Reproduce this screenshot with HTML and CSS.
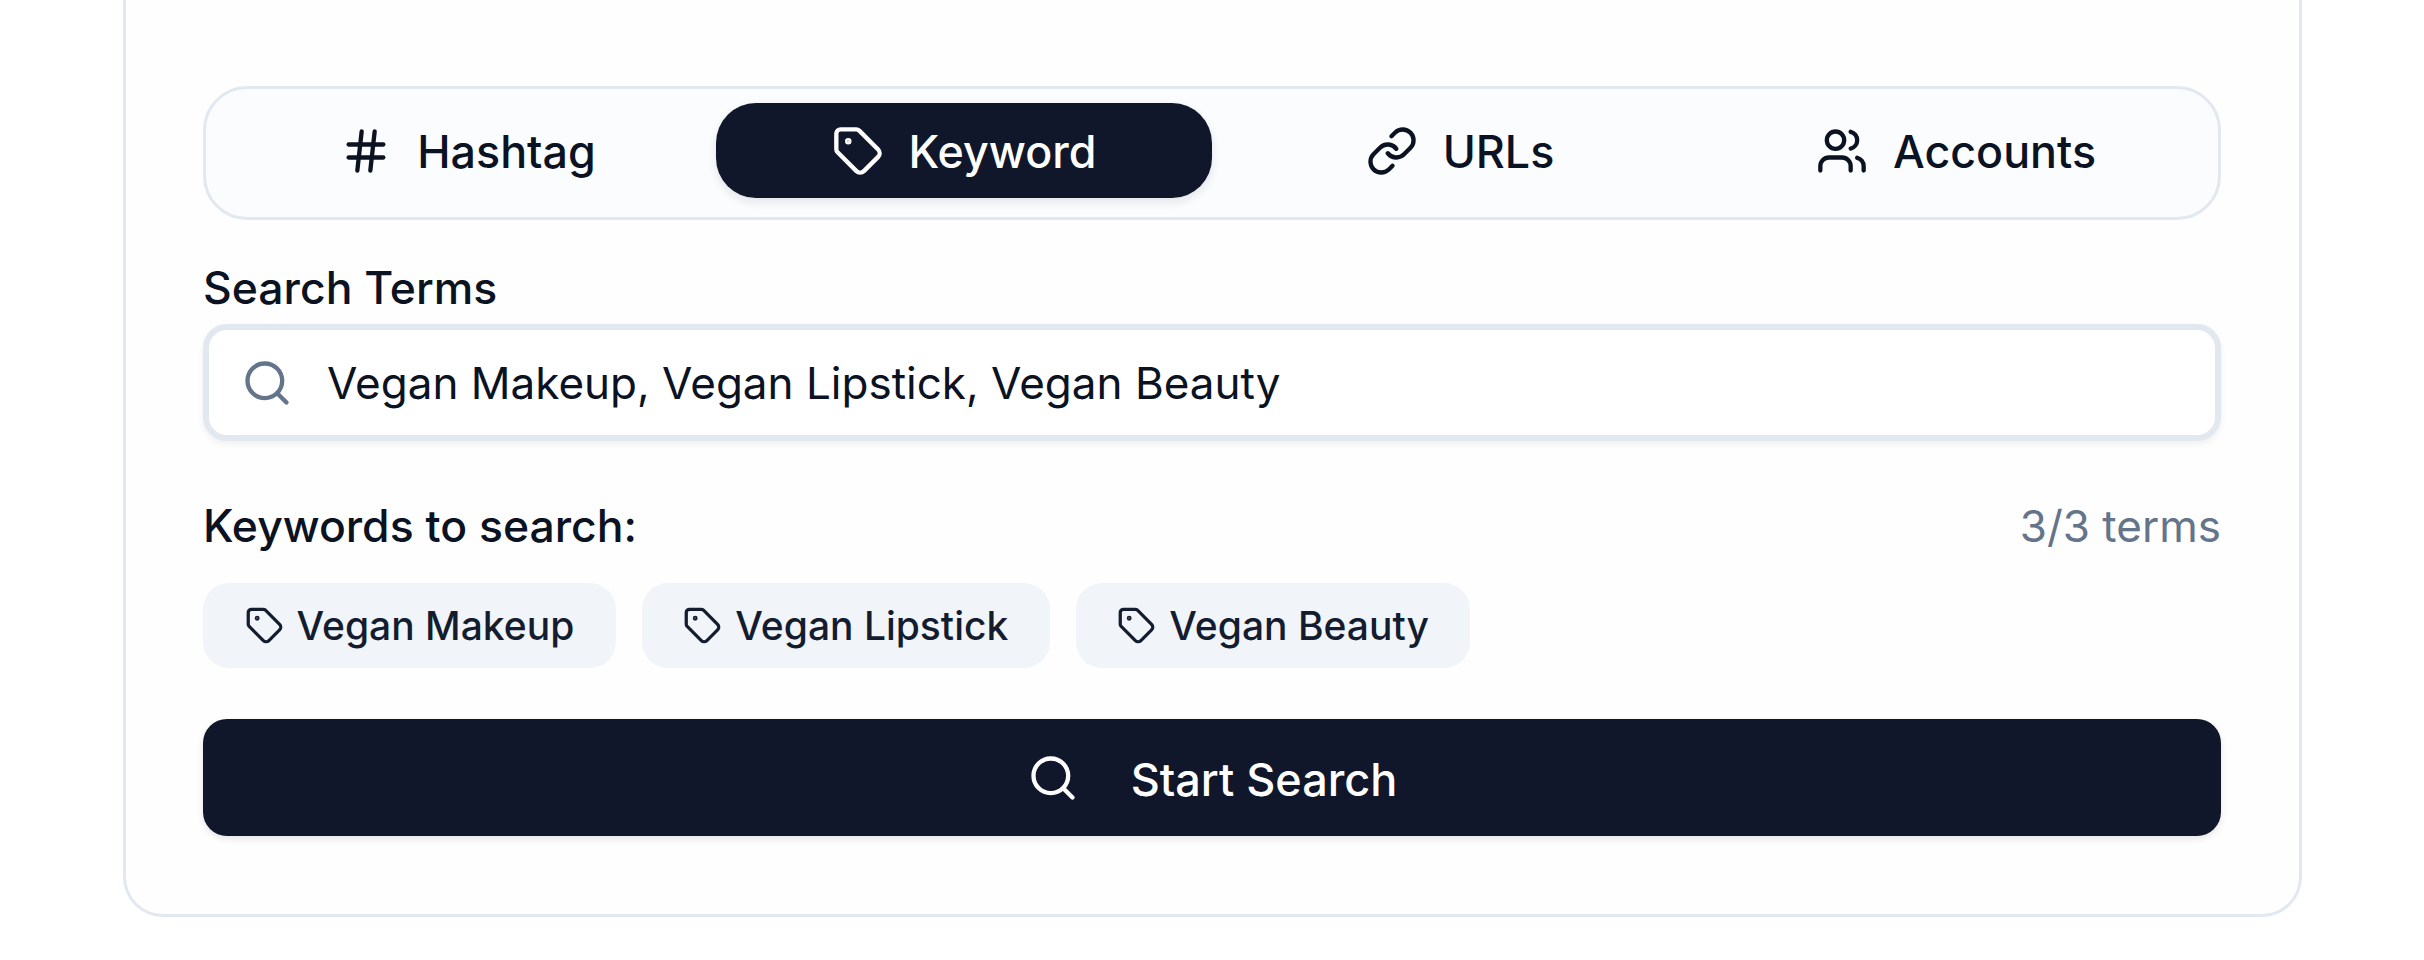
FILE: index.html
```html
<!DOCTYPE html>
<html lang="en">
<head>
    <meta charset="UTF-8">
    <meta name="viewport" content="width=device-width, initial-scale=1.0">
    <title>Search</title>
    <link rel="stylesheet" href="styles.css">
</head>
<body>
    <div class="card">
        <div class="tabs">
            <button class="tab">
                <svg class="icon-lg" viewBox="0 0 24 24"><line x1="4" y1="9" x2="20" y2="9"></line><line x1="4" y1="15" x2="20" y2="15"></line><line x1="10" y1="3" x2="8" y2="21"></line><line x1="16" y1="3" x2="14" y2="21"></line></svg>
                <span class="button-label">Hashtag</span>
            </button>
            <button class="tab active">
                <svg class="icon-lg" viewBox="0 0 24 24"><path d="M12.586 2.586A2 2 0 0 0 11.172 2H4a2 2 0 0 0-2 2v7.172a2 2 0 0 0 .586 1.414l8.704 8.704a2.426 2.426 0 0 0 3.42 0l6.58-6.58a2.426 2.426 0 0 0 0-3.42z"></path><circle cx="7.5" cy="7.5" r=".5" fill="currentColor"></circle></svg>
                <span class="button-label">Keyword</span>
            </button>
            <button class="tab">
                <svg class="icon-lg" viewBox="0 0 24 24"><path d="M10 13a5 5 0 0 0 7.54.54l3-3a5 5 0 0 0-7.07-7.07l-1.72 1.71"></path><path d="M14 11a5 5 0 0 0-7.54-.54l-3 3a5 5 0 0 0 7.07 7.07l1.71-1.71"></path></svg>
                <span class="button-label">URLs</span>
            </button>
            <button class="tab">
                <svg class="icon-lg" viewBox="0 0 24 24"><path d="M16 21v-2a4 4 0 0 0-4-4H6a4 4 0 0 0-4 4v2"></path><circle cx="9" cy="7" r="4"></circle><path d="M22 21v-2a4 4 0 0 0-3-3.87"></path><path d="M16 3.13a4 4 0 0 1 0 7.75"></path></svg>
                <span class="button-label">Accounts</span>
            </button>
        </div>

        <div class="field-label">Search Terms</div>
        <div class="search-box">
            <svg class="icon-lg search-icon" viewBox="0 0 24 24"><circle cx="11" cy="11" r="8"></circle><path d="m21 21-4.3-4.3"></path></svg>
            <span class="search-value">Vegan Makeup, Vegan Lipstick, Vegan Beauty</span>
        </div>

        <div class="terms-header">
            <span class="terms-title">Keywords to search:</span>
            <span class="terms-count">3/3 terms</span>
        </div>
        <div class="chips">
            <div class="chip">
                <svg class="icon-sm" viewBox="0 0 24 24"><path d="M12.586 2.586A2 2 0 0 0 11.172 2H4a2 2 0 0 0-2 2v7.172a2 2 0 0 0 .586 1.414l8.704 8.704a2.426 2.426 0 0 0 3.42 0l6.58-6.58a2.426 2.426 0 0 0 0-3.42z"></path><circle cx="7.5" cy="7.5" r=".5" fill="currentColor"></circle></svg>
                Vegan Makeup
            </div>
            <div class="chip">
                <svg class="icon-sm" viewBox="0 0 24 24"><path d="M12.586 2.586A2 2 0 0 0 11.172 2H4a2 2 0 0 0-2 2v7.172a2 2 0 0 0 .586 1.414l8.704 8.704a2.426 2.426 0 0 0 3.42 0l6.58-6.58a2.426 2.426 0 0 0 0-3.42z"></path><circle cx="7.5" cy="7.5" r=".5" fill="currentColor"></circle></svg>
                Vegan Lipstick
            </div>
            <div class="chip">
                <svg class="icon-sm" viewBox="0 0 24 24"><path d="M12.586 2.586A2 2 0 0 0 11.172 2H4a2 2 0 0 0-2 2v7.172a2 2 0 0 0 .586 1.414l8.704 8.704a2.426 2.426 0 0 0 3.42 0l6.58-6.58a2.426 2.426 0 0 0 0-3.42z"></path><circle cx="7.5" cy="7.5" r=".5" fill="currentColor"></circle></svg>
                Vegan Beauty
            </div>
        </div>

        <button class="start-button">
            <svg class="icon-lg" viewBox="0 0 24 24"><circle cx="11" cy="11" r="8"></circle><path d="m21 21-4.3-4.3"></path></svg>
            <span class="button-label">Start Search</span>
        </button>
    </div>
</body>
</html>
```

FILE: styles.css
```css
body {
    margin: 0;
    padding: 0 122px 0 123px;
    height: 960px;
    overflow: hidden;
    background-color: #FFFFFF;
    color: #0B1222;
    font-family: Inter, "Liberation Sans", sans-serif;
}
.card {
    padding: 86px 78px 78px 77px;
    border: 3px solid #E2E8F0;
    border-top: none;
    border-radius: 0 0 40px 40px;
    background-color: #FEFEFE;
}
svg {
    fill: none;
    stroke: currentColor;
    stroke-width: 2;
    stroke-linecap: round;
    stroke-linejoin: round;
    flex-shrink: 0;
}
.icon-lg {
    width: 52px;
    height: 52px;
}
.icon-sm {
    width: 39px;
    height: 39px;
}
.button-label {
    padding-top: 3px;
}
.tabs {
    display: grid;
    grid-template-columns: repeat(4, 1fr);
    padding: 14px 14px 19px;
    border: 3px solid #E2E8F0;
    border-radius: 44px;
    background-color: #FBFCFE;
}
.tab {
    display: flex;
    align-items: center;
    justify-content: center;
    gap: 25px;
    height: 95px;
    padding: 0;
    border: none;
    border-radius: 40px;
    background: none;
    color: #0B1222;
    font-family: inherit;
    font-size: 44.8px;
    font-weight: 450;
}
.tab.active {
    background-color: #10172A;
    color: #FFFFFF;
    box-shadow: 0 4px 10px rgba(15, 23, 42, 0.1);
}
.field-label {
    margin-top: 43px;
    font-size: 44.5px;
    font-weight: 450;
    line-height: 50px;
}
.search-box {
    display: flex;
    align-items: center;
    gap: 34px;
    box-sizing: border-box;
    height: 117px;
    margin-top: 11px;
    padding: 0 32px;
    border: 6px solid #E2E8F0;
    border-radius: 24px;
    background-color: #FFFFFF;
    box-shadow: 0 3px 6px rgba(15, 23, 42, 0.06);
}
.search-icon {
    color: #64748B;
}
.search-value {
    font-size: 44px;
}
.terms-header {
    display: flex;
    justify-content: space-between;
    align-items: center;
    margin-top: 60px;
    line-height: 50px;
}
.terms-title {
    font-size: 44.5px;
    font-weight: 450;
}
.terms-count {
    color: #64748B;
    font-size: 44px;
}
.chips {
    display: flex;
    gap: 26px;
    margin-top: 32px;
}
.chip {
    display: flex;
    align-items: center;
    gap: 13px;
    height: 85px;
    padding: 0 41.5px;
    border-radius: 26px;
    background-color: #F1F5F9;
    color: #141C30;
    font-size: 39px;
    font-weight: 450;
}
.start-button {
    display: flex;
    align-items: center;
    justify-content: center;
    gap: 52px;
    width: 100%;
    height: 117px;
    margin-top: 51px;
    padding: 0;
    border: none;
    border-radius: 24px;
    background-color: #10172A;
    color: #FFFFFF;
    font-family: inherit;
    font-size: 45px;
    font-weight: 450;
    box-shadow: 0 3px 6px rgba(15, 23, 42, 0.1);
}
```
